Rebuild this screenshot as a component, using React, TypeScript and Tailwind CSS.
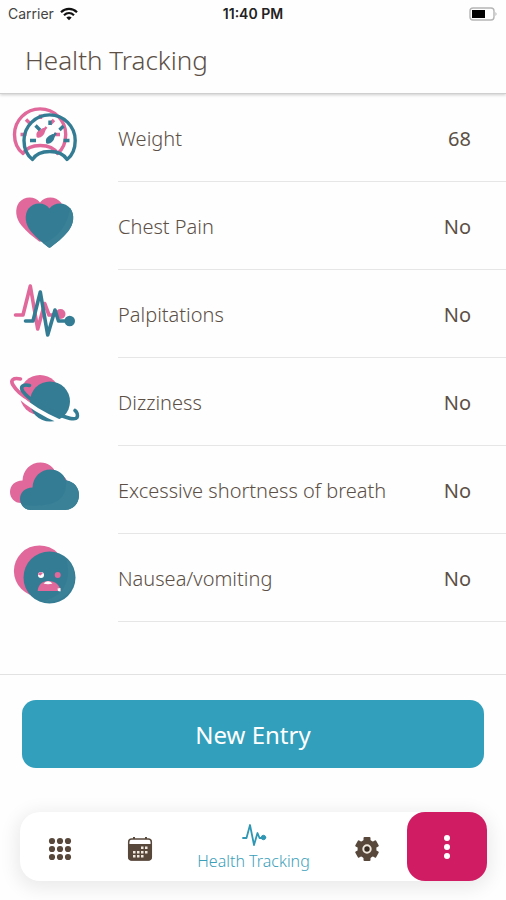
import type { ReactNode } from "react";

const PINK = "#e0689b";
const TEAL = "#347c93";
const TEAL_LIGHT = "#3a8197";

function TrackingIcon({ children }: { children: ReactNode }) {
  return (
    <svg viewBox="0 0 84 88" className="h-[88px] w-[84px] shrink-0" fill="none" aria-hidden="true">
      {children}
    </svg>
  );
}

function Gauge({ color }: { color: string }) {
  return (
    <g stroke={color} strokeWidth="3.400" strokeLinejoin="round">
      <path d="M32.500 65.500C28 62 24 56 24 46.500A25.600 25.600 0 0 1 75.200 46.500C75.200 56 71.500 62 67 65.500C64 60.500 58 57.500 49.800 57.500C41.500 57.500 35.500 60.500 32.500 65.500Z" />
      <path d="M30 46.500h6M35.500 31.500l4.500 4.500M50 26.500V31M59.500 36l4-4M63.500 46.500h6" />
      <path d="M50 46l6-7" strokeWidth="2.500" />
      <path d="M47 48.500c-1-3 1-5.500 6-7.500l1 1c-1 4.500-4 7.500-7 6.500z" fill={color} strokeWidth="2" />
    </g>
  );
}

function WeightIcon() {
  return (
    <TrackingIcon>
      <g transform="translate(-9.500 -6)">
        <Gauge color={PINK} />
      </g>
      <Gauge color={TEAL} />
    </TrackingIcon>
  );
}

function HeartIcon() {
  const heart =
    "M49.500 26.500C44.500 19.500 33.500 20 28.500 26.500C24 33 25 42 31 49.500C36 56 43 61 48 65Q49.500 66.300 51 65C56 61 63 56 68 49.500C74 42 75 33 70.500 26.500C65.500 20 54.500 19.500 49.500 26.500Z";
  return (
    <TrackingIcon>
      <path d={heart} fill={PINK} transform="translate(-9.500 -6)" />
      <path d={heart} fill={TEAL} />
      <path
        d="M70 26C75 33 74 42 68 49.500C63 56 56 61 51 65Q49.500 66.300 48 65L43 61C57 57 68 43 70 26Z"
        fill={TEAL_LIGHT}
      />
    </TrackingIcon>
  );
}

function PalpitationsIcon() {
  return (
    <TrackingIcon>
      <g strokeWidth="3.600" strokeLinecap="round" strokeLinejoin="round">
        <path d="M15.500 45h7.500l7.300-29 7.400 43 7-25.500 4.300 11.500h6" stroke={PINK} />
        <circle cx="60.500" cy="44" r="5" fill={PINK} />
        <path d="M25.500 51h7.500l7.300-29 7.400 43 7.300-25 3.500 11h6" stroke={TEAL} />
        <circle cx="69.700" cy="51" r="5.300" fill={TEAL} />
      </g>
    </TrackingIcon>
  );
}

function PlanetIcon() {
  return (
    <TrackingIcon>
      <circle cx="40" cy="37" r="20" fill={PINK} />
      <circle cx="50" cy="43.500" r="20" fill={TEAL} />
      <path d="M17 36.500C28 47 42 56 61 64" stroke="#fefefe" strokeWidth="4" />
      <path
        d="M20.500 21C13 19.500 10 22 13 27C16 32 23 38 29 41"
        stroke={PINK}
        strokeWidth="3.600"
        strokeLinecap="round"
      />
      <path
        d="M29.500 27.500C22 26 20 29 23 33.500C29 42 45 51 57 56C67 60 75 62.500 77 59.500C78 57 77 54 75 52.500"
        stroke={TEAL}
        strokeWidth="3.600"
        strokeLinecap="round"
      />
    </TrackingIcon>
  );
}

function CloudIcon() {
  const cloud =
    "M31 64C24.500 64 20 59 20 53C20 46.500 25 41.500 32.500 41.500C33 31 40.500 23.500 50.500 23.500C58 23.500 63.500 27.500 66 34.500C74 35.500 79 41.500 79 49C79 57.500 73 64 64.500 64Z";
  return (
    <TrackingIcon>
      <path d={cloud} fill={PINK} transform="translate(-10 -7)" />
      <path d={cloud} fill={TEAL} />
      <path
        d="M66 34.500C74 35.500 79 41.500 79 49C79 57.500 73 64 64.500 64H31C27 64 24 62 22 59C44 61 68 60 66 34.500Z"
        fill={TEAL_LIGHT}
      />
    </TrackingIcon>
  );
}

function SickFaceIcon() {
  return (
    <TrackingIcon>
      <circle cx="39.500" cy="37" r="25.600" fill={PINK} />
      <circle cx="49.500" cy="43.500" r="26" fill={TEAL} />
      <path d="M66 24C86 44 68 74 39 67C62 66 73 47 66 24Z" fill={TEAL_LIGHT} />
      <circle cx="41" cy="41" r="3" fill="#fff" />
      <path d="M38 40.500a3 3 0 0 1 5-1.500l-2.500 2.500z" fill={PINK} />
      <circle cx="57.700" cy="41" r="3" fill={PINK} />
      <path d="M37.700 57C38 51 42 47 48.500 47C55 47 60 51 60.500 57Z" fill={PINK} />
      <path d="M43.500 49.500Q48 45 52.500 49.500Q48 51 43.500 49.500ZM57.500 54.500L60.500 54V57.500L58 57Z" fill="#fff" />
    </TrackingIcon>
  );
}

const entries = [
  { label: "Weight", value: "68", icon: <WeightIcon /> },
  { label: "Chest Pain", value: "No", icon: <HeartIcon /> },
  { label: "Palpitations", value: "No", icon: <PalpitationsIcon /> },
  { label: "Dizziness", value: "No", icon: <PlanetIcon /> },
  { label: "Excessive shortness of breath", value: "No", icon: <CloudIcon /> },
  { label: "Nausea/vomiting", value: "No", icon: <SickFaceIcon /> },
];

function StatusBar() {
  return (
    <div className="grid h-7 grid-cols-3 items-center px-2 font-['Inter',sans-serif] text-sm">
      <div className="flex items-center gap-1.5 text-[#444]">
        <span>Carrier</span>
        <svg viewBox="0 0 18 14" className="h-[14px] w-[18px]" fill="none" stroke="#111" strokeWidth="2.200" role="img" aria-label="Wi-Fi">
          <path d="M1 5.200C5.500 .8 12.500 .8 17 5.200" />
          <path d="M4 8.300C7 5.500 11 5.500 14 8.300" />
          <path d="M9 13.200L6.300 10.500Q9 8.300 11.700 10.500Z" fill="#111" stroke="none" />
        </svg>
      </div>
      <div className="text-center font-semibold text-[#222]">11:40 PM</div>
      <svg viewBox="0 0 30 14" className="h-[14px] w-[30px] justify-self-end" fill="none" role="img" aria-label="Battery">
        <rect x="2" y="1" width="24" height="12" rx="3" stroke="#b5b5b5" strokeWidth="1.400" />
        <rect x="4" y="3" width="13" height="8" fill="#000" />
        <path d="M27.500 5v4q2-2 0-4z" fill="#aaa" />
      </svg>
    </div>
  );
}

function NavBar() {
  return (
    <nav className="mr-[19px] ml-5 flex h-[69px] rounded-[20px] bg-white shadow-[0_4px_18px_4px_rgba(0,0,0,0.08)]">
      <button type="button" aria-label="Menu" className="flex w-20 items-center justify-center pt-1">
        <svg viewBox="0 0 24 24" className="size-6" fill="#58483b">
          {[4, 12, 20].map((y) =>
            [4, 12, 20].map((x) => <circle key={`${x}-${y}`} cx={x} cy={y} r="3.100" />)
          )}
        </svg>
      </button>
      <button type="button" aria-label="Calendar" className="flex w-20 items-center justify-center pt-1">
        <svg viewBox="0 0 26 26" className="size-[26px]" fill="none">
          <path d="M7 1v3M19 1v3" stroke="#58483b" strokeWidth="2" />
          <rect x="1.700" y="3" width="22.600" height="21" rx="3" fill="#fff" stroke="#58483b" strokeWidth="1.500" />
          <path d="M1.500 8h23v13.500q0 3-3 3h-17q-3 0-3-3z" fill="#58483b" />
          <path
            d="M14 10.500h2.500v2.500H14zM18 10.500h2.500v2.500H18zM6 15h2.500v2.500H6zM10 15h2.500v2.500H10zM14 15h2.500v2.500H14zM18 15h2.500v2.500H18zM6 19h2.500v2.500H6zM10 19h2.500v2.500H10zM14 19h2.500v2.500H14z"
            fill="#f1e8dd"
          />
        </svg>
      </button>
      <button
        type="button"
        aria-current="page"
        className="flex flex-1 flex-col items-center justify-center pt-1 text-[#3c9fba]"
      >
        <svg viewBox="0 0 26 24" className="h-6 w-[26px]" fill="none" stroke="#2f97b3" strokeWidth="1.800" strokeLinejoin="round" strokeLinecap="round" aria-hidden="true">
          <path d="M2 15h3.500L9 2l4 20 3.500-12 2 5h3" />
          <circle cx="22.500" cy="14.500" r="2.200" fill="#2f97b3" strokeWidth="1" />
        </svg>
        <span className="text-base leading-7 font-light whitespace-nowrap">Health Tracking</span>
      </button>
      <button type="button" aria-label="Settings" className="flex w-20 items-center justify-center pt-1">
        <svg viewBox="0 0 26 26" className="size-[26px]" fill="#58483b">
          <circle cx="13" cy="13" r="9.500" />
          {[0, 60, 120, 180, 240, 300].map((angle) => (
            <rect key={angle} x="9.500" y="1" width="7" height="6" rx="1" transform={`rotate(${angle} 13 13)`} />
          ))}
          <circle cx="13" cy="13" r="3.700" fill="#382c22" stroke="#f1e8dd" strokeWidth="2" />
        </svg>
      </button>
      <button
        type="button"
        aria-label="More"
        className="flex w-20 items-center justify-center rounded-[18px] bg-[#cf1c63]"
      >
        <svg viewBox="0 0 8 24" className="h-6 w-2" fill="#fff">
          <circle cx="4" cy="3" r="3" />
          <circle cx="4" cy="12" r="3" />
          <circle cx="4" cy="21" r="3" />
        </svg>
      </button>
    </nav>
  );
}

export default function App() {
  return (
    <div className="flex min-h-screen flex-col overflow-hidden bg-[#fefefe] font-['Noto_Sans',sans-serif] text-[#5c5046]">
      <header className="border-b border-[#cfcfcf] shadow-[0_1px_3px_rgba(0,0,0,0.2)]">
        <StatusBar />
        <h1 className="px-[25px] pt-4 pb-[17px] text-[26px] leading-8 font-light">Health Tracking</h1>
      </header>

      <main>
        <ul className="pb-[52px]">
          {entries.map((entry) => (
            <li key={entry.label} className="flex h-[88px]">
              {entry.icon}
              <div className="ml-[34px] flex flex-1 items-center justify-between border-b border-[#e6e6e6] pt-0.5 pr-[35px] text-xl">
                <span className="font-light">{entry.label}</span>
                <span>{entry.value}</span>
              </div>
            </li>
          ))}
        </ul>

        <div className="border-t border-[#e2e2e2] px-[22px] pt-[25px]">
          <button
            type="button"
            className="h-[68px] w-full rounded-[14px] bg-[#329fbc] pt-0.5 text-2xl text-white"
          >
            New Entry
          </button>
        </div>
      </main>

      <footer className="pt-11 pb-[19px]">
        <NavBar />
      </footer>
    </div>
  );
}
